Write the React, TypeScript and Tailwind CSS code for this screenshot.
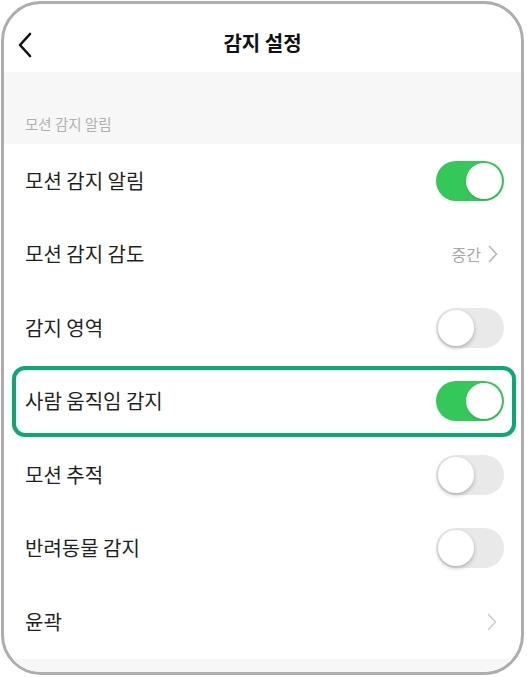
import React from "react";

const font = { fontFamily: '"Noto Sans CJK KR", "Noto Sans", sans-serif' };

function Toggle({ on }: { on: boolean }) {
  return (
    <div
      className={
        "relative w-[68px] h-[40px] rounded-full " +
        (on ? "bg-[#34c759]" : "bg-[#e9e9ea]")
      }
    >
      <div
        className={
          "absolute top-[2px] w-[36px] h-[36px] rounded-full bg-white " +
          (on
            ? "right-[2px] shadow-[0_1px_2px_rgba(0,0,0,0.15)]"
            : "left-[2px] shadow-[0_2px_4px_rgba(0,0,0,0.25)]")
        }
      />
    </div>
  );
}

function Chevron({ color }: { color: string }) {
  return (
    <svg width="10" height="18" viewBox="0 0 10 18" fill="none">
      <path d="M1.5 1.5 L8.5 9 L1.5 16.5" stroke={color} strokeWidth="1.6" strokeLinecap="round" strokeLinejoin="round" />
    </svg>
  );
}

function Row({ label, children }: { label: string; children?: React.ReactNode }) {
  return (
    <div className="h-[73.5px] flex items-center justify-between pl-[21px] pr-[17px]">
      <span className="text-[20px] text-[#1f1f1f]">{label}</span>
      {children}
    </div>
  );
}

export default function App() {
  return (
    <div className="w-[527px] h-[677px] bg-white p-[1px]" style={font}>
      <div className="w-[523px] h-[674px] border-[3px] border-[#adadad] rounded-[40px] overflow-hidden flex flex-col bg-white">
        <div className="h-[68px] shrink-0 relative flex items-center justify-center">
          <div className="absolute left-[13px] top-[28px]">
            <svg width="16" height="26" viewBox="0 0 16 26" fill="none">
              <path d="M13 2 L3 13 L13 24" stroke="#111" strokeWidth="2.6" strokeLinecap="round" strokeLinejoin="round" />
            </svg>
          </div>
          <span className="text-[20px] font-bold text-[#111] mt-[10px]">감지 설정</span>
        </div>
        <div className="h-[72px] shrink-0 bg-[#f7f7f7] flex items-end pl-[21px] pb-[9px]">
          <span className="text-[14.5px] text-[#b0b0b0]">모션 감지 알림</span>
        </div>
        <div className="flex flex-col">
          <Row label="모션 감지 알림">
            <Toggle on />
          </Row>
          <Row label="모션 감지 감도">
            <div className="flex items-center gap-[7px] mr-[6px]">
              <span className="text-[16px] text-[#a8a8a8]">중간</span>
              <Chevron color="#b5b5b5" />
            </div>
          </Row>
          <Row label="감지 영역">
            <Toggle on={false} />
          </Row>
          <div className="h-[73.5px] flex items-center">
            <div className="ml-[8px] mr-[5px] flex-1 h-[71px] border-[4px] border-[#0aa96f] rounded-[13px] flex items-center justify-between pl-[9px] pr-[8px]">
              <span className="text-[20px] text-[#1f1f1f]">사람 움직임 감지</span>
              <Toggle on />
            </div>
          </div>
          <Row label="모션 추적">
            <Toggle on={false} />
          </Row>
          <Row label="반려동물 감지">
            <Toggle on={false} />
          </Row>
          <Row label="윤곽">
            <div className="mr-[7px]">
              <Chevron color="#c6ccd6" />
            </div>
          </Row>
        </div>
        <div className="flex-1 bg-[#f7f7f7]" />
      </div>
    </div>
  );
}
